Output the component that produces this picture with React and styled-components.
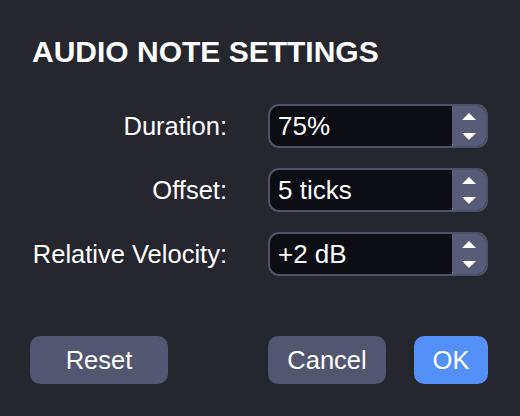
import React from "react";
import styled, { createGlobalStyle } from "styled-components";

const GlobalStyle = createGlobalStyle`
  html, body {
    margin: 0;
    padding: 0;
    background: #26262e;
  }
  body {
    font-family: "Liberation Sans", Arial, sans-serif;
    color: #ffffff;
  }
`;

const Dialog = styled.div`
  width: 520px;
  height: 416px;
  box-sizing: border-box;
  padding: 32px 32px 32px 30px;
  background: #26262e;
  display: flex;
  flex-direction: column;
`;

const Title = styled.h1`
  margin: 0 0 0 2px;
  font-size: 30px;
  line-height: 40px;
  font-weight: 700;
`;

const Form = styled.div`
  margin-top: 32px;
  display: grid;
  grid-template-columns: 1fr 220px;
  column-gap: 41px;
  row-gap: 20px;
  align-items: center;
`;

const Label = styled.label`
  text-align: right;
  font-size: 25.5px;
  line-height: 44px;
`;

const Field = styled.div`
  height: 44px;
  box-sizing: border-box;
  border: 2px solid #4f5268;
  border-radius: 11px;
  background: #0c0d12;
  display: flex;
  overflow: hidden;
`;

const Value = styled.div`
  flex: 1;
  padding-left: 8px;
  font-size: 26px;
  line-height: 40px;
`;

const Stepper = styled.div`
  width: 34px;
  background: #585c78;
  display: flex;
  flex-direction: column;
  align-items: center;
  justify-content: center;
  gap: 13px;
`;

const Arrow = styled.span`
  width: 0;
  height: 0;
  border-left: 7px solid transparent;
  border-right: 7px solid transparent;
  ${(p) =>
    p.$down
      ? "border-top: 7px solid #ffffff;"
      : "border-bottom: 7px solid #ffffff;"}
`;

const Footer = styled.div`
  margin-top: auto;
  display: flex;
  align-items: center;
`;

const Button = styled.button`
  height: 48px;
  width: ${(p) => p.$width}px;
  margin-left: ${(p) => p.$gap || 0}px;
  border: none;
  border-radius: 10px;
  background: ${(p) => (p.$primary ? "#5590f8" : "#535670")};
  color: #ffffff;
  font-family: "Liberation Sans", Arial, sans-serif;
  font-size: 25.5px;
  padding: 0;
  cursor: pointer;
`;

const Spacer = styled.div`
  flex: 1;
`;

function NumberField({ value }) {
  return (
    <Field>
      <Value>{value}</Value>
      <Stepper>
        <Arrow />
        <Arrow $down />
      </Stepper>
    </Field>
  );
}

export default function App() {
  return (
    <>
      <GlobalStyle />
      <Dialog>
        <Title>AUDIO NOTE SETTINGS</Title>
        <Form>
          <Label>Duration:</Label>
          <NumberField value="75%" />
          <Label>Offset:</Label>
          <NumberField value="5 ticks" />
          <Label>Relative Velocity:</Label>
          <NumberField value="+2 dB" />
        </Form>
        <Footer>
          <Button $width={138}>Reset</Button>
          <Spacer />
          <Button $width={118}>Cancel</Button>
          <Button $width={74} $gap={28} $primary>
            OK
          </Button>
        </Footer>
      </Dialog>
    </>
  );
}
